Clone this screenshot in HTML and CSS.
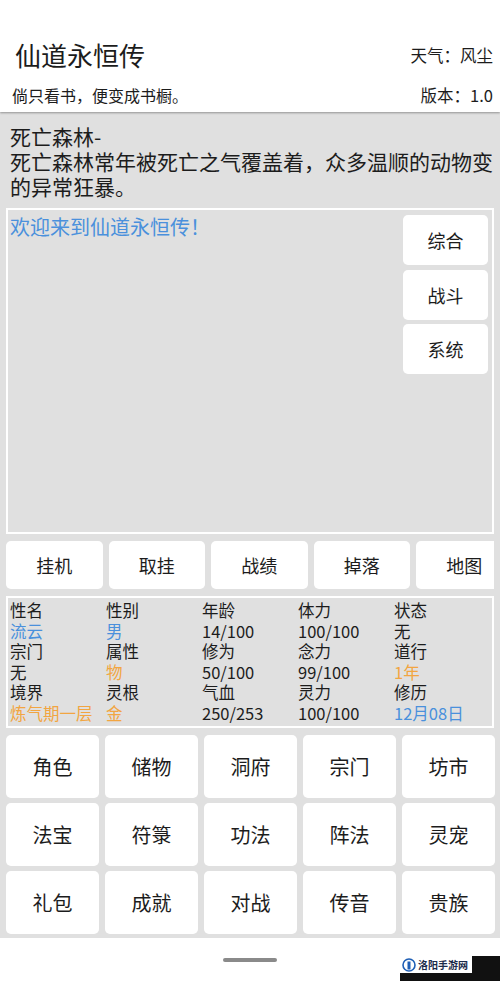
FILE: index.html
```html
<!DOCTYPE html>
<html lang="zh-CN">

<head>
    <meta charset="UTF-8" />
    <meta name="viewport" content="width=device-width, initial-scale=1.0" />
    <title>仙道永恒传</title>
    <link rel="stylesheet" href="styles.css">
</head>

<body>
    <header class="top">
        <div class="top-row">
            <h1 class="title">仙道永恒传</h1>
            <span class="info">天气：风尘</span>
        </div>
        <div class="sub-row">
            <span>倘只看书，便变成书橱。</span>
            <span class="info">版本：1.0</span>
        </div>
    </header>

    <p class="place">死亡森林-<br>死亡森林常年被死亡之气覆盖着，众多温顺的动物变的异常狂暴。</p>

    <section class="log">
        <div class="log-text">欢迎来到仙道永恒传！</div>
        <div class="log-tabs">
            <button class="btn">综合</button>
            <button class="btn">战斗</button>
            <button class="btn">系统</button>
        </div>
    </section>

    <div class="actions">
        <button class="btn">挂机</button>
        <button class="btn">取挂</button>
        <button class="btn">战绩</button>
        <button class="btn">掉落</button>
        <button class="btn">地图</button>
    </div>

    <section class="stats">
        <div>性名<br><span class="blue">流云</span></div>
        <div>性别<br><span class="blue">男</span></div>
        <div>年龄<br>14/100</div>
        <div>体力<br>100/100</div>
        <div>状态<br>无</div>
        <div>宗门<br>无</div>
        <div>属性<br><span class="orange">物</span></div>
        <div>修为<br>50/100</div>
        <div>念力<br>99/100</div>
        <div>道行<br><span class="orange">1年</span></div>
        <div>境界<br><span class="orange">炼气期一层</span></div>
        <div>灵根<br><span class="orange">金</span></div>
        <div>气血<br>250/253</div>
        <div>灵力<br>100/100</div>
        <div>修历<br><span class="blue">12月08日</span></div>
    </section>

    <nav class="menu">
        <button class="btn">角色</button>
        <button class="btn">储物</button>
        <button class="btn">洞府</button>
        <button class="btn">宗门</button>
        <button class="btn">坊市</button>
        <button class="btn">法宝</button>
        <button class="btn">符箓</button>
        <button class="btn">功法</button>
        <button class="btn">阵法</button>
        <button class="btn">灵宠</button>
        <button class="btn">礼包</button>
        <button class="btn">成就</button>
        <button class="btn">对战</button>
        <button class="btn">传音</button>
        <button class="btn">贵族</button>
    </nav>

    <footer class="bottom">
        <div class="home-bar"></div>
        <div class="mark">
            <div class="mark-label">
                <svg width="14" height="14" viewBox="0 0 14 14">
                    <circle cx="7" cy="7" r="6" fill="none" stroke="#1f5fb5" stroke-width="1.6" />
                    <rect x="5.5" y="3.5" width="3" height="8" fill="#1f5fb5" />
                </svg>
                <span class="mark-name">洛阳手游网</span>
            </div>
        </div>
    </footer>
</body>

</html>
```

FILE: styles.css
```css
body {
    margin: 0;
    width: 500px;
    height: 981px;
    overflow: hidden;
    background: #e0e0e0;
    color: #1c1c1c;
    font-family: "Noto Sans CJK SC", "Noto Sans", sans-serif;
    position: relative;
}

.top {
    background: white;
    height: 112px;
    box-sizing: border-box;
    padding: 36px 7px 0 12px;
    box-shadow: 0 1px 2px rgba(0, 0, 0, 0.35);
    position: relative;
}

.top-row {
    display: flex;
    justify-content: space-between;
    align-items: center;
    height: 38px;
}

.title {
    margin: 0 0 0 3px;
    font-size: 26px;
    font-weight: normal;
    line-height: 38px;
}

.sub-row {
    display: flex;
    justify-content: space-between;
    align-items: center;
    height: 24px;
    margin-top: 9px;
    font-size: 16px;
}

.info {
    font-size: 16.5px;
}

.place {
    margin: 0;
    padding: 12px 0 0 10px;
    font-size: 21px;
    line-height: 25px;
}

/* 消息面板 */
.log {
    margin: 9px 6px 0;
    height: 326px;
    box-sizing: border-box;
    border: 2px solid white;
    display: flex;
    justify-content: space-between;
}

.log-text {
    padding: 5px 0 0 2px;
    font-size: 20px;
    line-height: 24px;
    color: #4a90dc;
}

.log-tabs {
    display: flex;
    flex-direction: column;
    gap: 4.5px;
    padding: 5px 4px 0 0;
}

.log-tabs .btn {
    width: 85px;
    height: 50px;
}

.btn {
    background: white;
    border: none;
    border-radius: 5px;
    padding: 0;
    font-family: inherit;
    font-size: 18px;
    color: #1c1c1c;
}

.actions {
    margin: 7px 6px 0;
    display: flex;
    gap: 6px;
    overflow: hidden;
}

.actions .btn {
    flex: 0 0 96.5px;
    height: 48px;
}

/* 角色属性 */
.stats {
    margin: 7px 6px 0;
    height: 132px;
    box-sizing: border-box;
    border: 2px solid white;
    padding: 2px 0 0 2px;
    display: grid;
    grid-template-columns: repeat(5, 96px);
    align-content: start;
    font-size: 16.5px;
    line-height: 20.6px;
}

.blue {
    color: #4a90dc;
}

.orange {
    color: #f2a541;
}

.menu {
    margin: 7px 6px 0;
    display: grid;
    grid-template-columns: repeat(5, 93px);
    grid-auto-rows: 63px;
    column-gap: 6px;
    row-gap: 5px;
}

.menu .btn {
    font-size: 20px;
}

.bottom {
    position: absolute;
    left: 0;
    right: 0;
    top: 938px;
    bottom: 0;
    background: white;
}

.home-bar {
    width: 54px;
    height: 4px;
    border-radius: 2px;
    background: #8a8a8a;
    margin: 20px auto 0;
}

/* 角标水印 */
.mark {
    position: absolute;
    left: 400px;
    top: 18px;
    right: 0;
    bottom: 0;
    background: #111;
}

.mark-label {
    width: 72px;
    height: 17px;
    background: white;
    display: flex;
    align-items: center;
    gap: 2px;
    padding-left: 2px;
    box-sizing: border-box;
}

.mark-name {
    font-size: 10px;
    line-height: 12px;
    font-weight: bold;
    color: #1a2a4a;
}
```
